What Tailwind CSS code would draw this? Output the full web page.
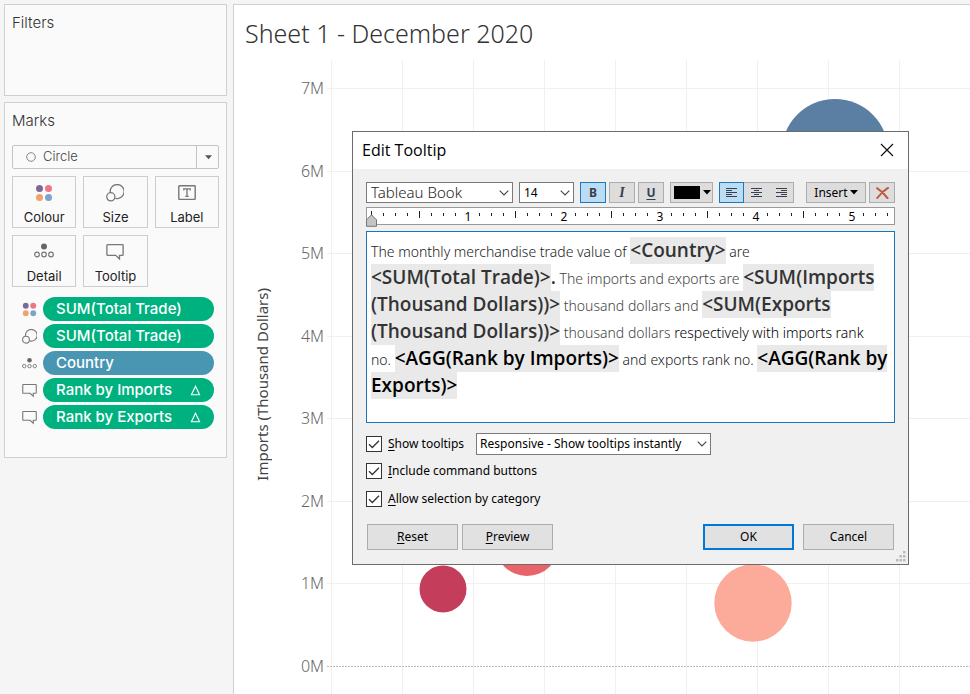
<!DOCTYPE html>
<html lang="en">
<head>
<meta charset="utf-8">
<title>Sheet 1 - December 2020</title>
<script src="https://cdn.jsdelivr.net/npm/@tailwindcss/browser@4"></script>
</head>
<body class="bg-[#f5f5f5] font-['Inter','Liberation_Sans',sans-serif] text-[#444]">
<svg class="hidden" aria-hidden="true">
  <symbol id="i-colour" viewBox="0 0 18 18"><circle cx="4.5" cy="4.5" r="3.5" fill="#7d6a94"/><circle cx="13.5" cy="4.5" r="3.5" fill="#ee7683"/><circle cx="4.5" cy="13.5" r="3.5" fill="#f0a36c"/><circle cx="13.5" cy="13.5" r="3.5" fill="#7ba3cc"/></symbol>
  <symbol id="i-size" viewBox="0 0 18 18"><g fill="none" stroke="#777" stroke-width="1.3"><path d="M4.2 8.4A7 7 0 1 1 9.4 14.3"/><circle cx="4.8" cy="12.8" r="4.1"/></g></symbol>
  <symbol id="i-detail" viewBox="0 0 20 16"><circle cx="10" cy="3.5" r="3" fill="#666"/><g fill="none" stroke="#777" stroke-width="1.2"><circle cx="3" cy="11.5" r="2.3"/><circle cx="10" cy="11.5" r="2.3"/><circle cx="17" cy="11.5" r="2.3"/></g></symbol>
  <symbol id="i-tooltip" viewBox="0 0 18 18"><path d="M1.5 1.7h15q.6 0 .6.6v9.4q0 .6-.6.6h-3v3.6l-3.8-3.6H1.5q-.6 0-.6-.6V2.3q0-.6.6-.6z" fill="none" stroke="#777" stroke-width="1.3"/></symbol>
  <symbol id="i-label" viewBox="0 0 18 18"><rect x=".8" y="1.7" width="16.4" height="13.7" rx=".6" fill="none" stroke="#777" stroke-width="1.4"/><path d="M5.8 6.4V4.800h6.4v1.6M9 4.8v7.5M7.300 12.300h3.4" fill="none" stroke="#777" stroke-width="1.3"/></symbol>
  <symbol id="i-chev" viewBox="0 0 10 6"><path d="M.7.7 5 5 9.300.7" fill="none" stroke="#444" stroke-width="1.1"/></symbol>
  <symbol id="i-tri" viewBox="0 0 8 5"><path d="M0 0h8L4 4.500z" fill="currentColor"/></symbol>
  <symbol id="i-check" viewBox="0 0 16 16"><path d="M3 8.300 6.300 11.500 13 4.800" fill="none" stroke="#333" stroke-width="1.3"/></symbol>
</svg>

<div class="flex h-screen overflow-hidden">
  <aside class="w-[233px] shrink-0 pl-1 pr-1.5 pt-1 flex flex-col gap-1.5">
    <section class="h-[92px] shrink-0 border border-[#d0d0d0] bg-[#fafafa] px-[7px] py-2">
      <h2 class="text-[15px] leading-5 font-light text-[#333]">Filters</h2>
    </section>
    <section class="border border-[#d0d0d0] bg-[#fafafa] px-[7px] pt-2 pb-7">
      <h2 class="text-[15px] leading-5 font-light text-[#333]">Marks</h2>
      <div class="relative mt-3.5">
        <select aria-label="Mark type" class="block w-full h-6 appearance-none rounded-[2px] border border-[#c4c4c4] pl-[30px] text-[13px] font-light text-[#444] outline-none"><option>Circle</option></select>
        <svg class="absolute left-3.5 top-[7px] size-2.5 pointer-events-none"><circle cx="5" cy="5" r="4.300" fill="none" stroke="#888"/></svg>
        <span class="absolute right-0 top-0 flex h-6 w-[23px] items-center justify-center border-l border-[#c4c4c4] text-[#555] pointer-events-none"><svg class="w-[7px] h-[5px]"><use href="#i-tri"/></svg></span>
      </div>
      <div class="mt-[7px] grid grid-cols-3 gap-[7px] text-[13px] leading-4 text-[#222]">
        <button class="flex h-[52px] flex-col items-center justify-between border border-[#cdcdcd] pt-[7px] pb-0.5"><svg class="size-[18px]"><use href="#i-colour"/></svg><span>Colour</span></button>
        <button class="flex h-[52px] flex-col items-center justify-between border border-[#cdcdcd] pt-[7px] pb-0.5"><svg class="size-[18px]"><use href="#i-size"/></svg><span>Size</span></button>
        <button class="flex h-[52px] flex-col items-center justify-between border border-[#cdcdcd] pt-[7px] pb-0.5"><svg class="size-[18px]"><use href="#i-label"/></svg><span>Label</span></button>
        <button class="flex h-[52px] flex-col items-center justify-between border border-[#cdcdcd] pt-[7px] pb-0.5"><svg class="h-4 w-5"><use href="#i-detail"/></svg><span>Detail</span></button>
        <button class="flex h-[52px] flex-col items-center justify-between border border-[#cdcdcd] pt-[7px] pb-0.5"><svg class="size-[18px]"><use href="#i-tooltip"/></svg><span>Tooltip</span></button>
      </div>
      <ul class="mt-2.5 flex flex-col gap-[3px] pl-2.5 pr-[5px] text-[15px] font-medium text-white">
        <li class="flex h-6 items-center gap-1.5"><svg class="size-[15px]"><use href="#i-colour"/></svg><span class="flex h-full flex-1 items-center rounded-full bg-[#00b180] px-[13px] pt-px">SUM(Total Trade)</span></li>
        <li class="flex h-6 items-center gap-1.5"><svg class="size-[15px]"><use href="#i-size"/></svg><span class="flex h-full flex-1 items-center rounded-full bg-[#00b180] px-[13px] pt-px">SUM(Total Trade)</span></li>
        <li class="flex h-6 items-center gap-1.5"><svg class="size-[15px]"><use href="#i-detail"/></svg><span class="flex h-full flex-1 items-center rounded-full bg-[#4996b2] px-[13px] pt-px">Country</span></li>
        <li class="flex h-6 items-center gap-1.5"><svg class="size-[15px]"><use href="#i-tooltip"/></svg><span class="flex h-full flex-1 items-center justify-between rounded-full bg-[#00b180] px-[13px] pt-px">Rank by Imports<svg class="size-[11px]"><path d="M5.500 1.200 9.600 9.800H1.400z" fill="none" stroke="#fff" stroke-width="1.1"/></svg></span></li>
        <li class="flex h-6 items-center gap-1.5"><svg class="size-[15px]"><use href="#i-tooltip"/></svg><span class="flex h-full flex-1 items-center justify-between rounded-full bg-[#00b180] px-[13px] pt-px">Rank by Exports<svg class="size-[11px]"><path d="M5.500 1.200 9.600 9.800H1.400z" fill="none" stroke="#fff" stroke-width="1.1"/></svg></span></li>
      </ul>
    </section>
  </aside>

  <main class="mt-1 flex min-w-0 flex-1 flex-col border-l border-t border-[#d0d0d0] bg-white font-['Noto_Sans','Open_Sans',sans-serif]">
    <h1 class="h-[55px] shrink-0 pl-[11px] pt-[11px] text-[25px] leading-[34px] font-light text-[#333]">Sheet 1 - December 2020</h1>
    <div class="flex min-h-0 flex-1">
      <div class="flex w-10 items-center justify-center pl-4 pt-3.5"><span class="[writing-mode:vertical-rl] rotate-180 whitespace-nowrap text-[15px] leading-5 text-[#444]">Imports (Thousand Dollars)</span></div>
      <ul class="flex w-[50px] flex-col justify-between py-[18px] text-right text-[16px] leading-5 font-light text-[#666]">
        <li>7M</li><li>6M</li><li>5M</li><li>4M</li><li>3M</li><li>2M</li><li>1M</li><li>0M</li>
      </ul>
      <svg class="ml-[3px] h-full min-w-0 flex-1" role="img" aria-label="Imports by country">
        <g stroke="#f0f0f0" stroke-width="1">
          <path d="M4.500 0v700M75.500 0v700M146.500 0v700M217.500 0v700M288.500 0v700M359.500 0v700M430.500 0v700M501.500 0v700M572.500 0v700"/>
          <path d="M0 28.500h2000M0 111.500h2000M0 193.500h2000M0 276.500h2000M0 358.500h2000M0 441.500h2000M0 523.500h2000"/>
        </g>
        <path d="M0 606.500h2000" stroke="#bbb" stroke-dasharray="2 1"/>
        <circle cx="508" cy="92.500" r="53.500" fill="#5b7fa3"/>
        <circle cx="200" cy="484" r="32" fill="#e8646a"/>
        <circle cx="116" cy="529" r="23.500" fill="#c43e5b"/>
        <circle cx="426" cy="543" r="38.700" fill="#fcaa99"/>
      </svg>
    </div>
  </main>
</div>

<div role="dialog" aria-label="Edit Tooltip" class="absolute left-[352px] top-[131px] w-[557px] border border-[#6b6b6b] bg-[#f0f0f0] font-['Noto_Sans','Open_Sans',sans-serif] text-[12px] text-black">
  <header class="flex h-[37px] items-center justify-between bg-white pb-px pl-[9px] pr-3.5">
    <h2 class="font-['Open_Sans',sans-serif] text-[16px] leading-6">Edit Tooltip</h2>
    <button aria-label="Close" class="size-[14px]"><svg viewBox="0 0 14 14"><path d="M1 1l12 12M13 1 1 13" stroke="#111" stroke-width="1.2"/></svg></button>
  </header>
  <div class="px-[13px] pt-[13px] pb-3.5">
    <div class="flex h-[21px] justify-between">
      <div class="flex gap-1.5">
        <div class="relative w-[147px]"><select aria-label="Font" class="block h-full w-full appearance-none border border-[#7a7a7a] bg-white pl-1 text-[15px] leading-[19px] font-light text-[#222] outline-none"><option>Tableau Book</option></select><svg class="absolute right-1 top-2 h-1.5 w-2.5 pointer-events-none"><use href="#i-chev"/></svg></div>
        <div class="relative w-[55px]"><select aria-label="Font size" class="block h-full w-full appearance-none border border-[#7a7a7a] bg-white pl-1 text-[12px] outline-none"><option>14</option></select><svg class="absolute right-1 top-2 h-1.5 w-2.5 pointer-events-none"><use href="#i-chev"/></svg></div>
        <div class="flex gap-[3px] text-[#36404f]">
          <button aria-label="Bold" class="flex w-[26px] items-center justify-center border border-[#1a7ac0] bg-[#bcdcf4] font-bold">B</button>
          <button aria-label="Italic" class="flex w-[26px] items-center justify-center border border-[#adadad] bg-[#ddd] font-['Liberation_Serif',serif] text-[14px] font-bold italic">I</button>
          <button aria-label="Underline" class="flex w-[26px] items-center justify-center border border-[#adadad] bg-[#ddd] font-bold underline underline-offset-2">U</button>
        </div>
        <button aria-label="Text colour" class="flex w-[43px] items-center justify-between border border-[#adadad] bg-[#ddd] pl-[3px] pr-px"><span class="h-[13px] w-[26px] bg-black"></span><svg class="h-[5px] w-2"><use href="#i-tri"/></svg></button>
        <div class="flex">
          <button aria-label="Align left" class="flex w-[25px] items-center justify-center border border-[#1a7ac0] bg-[#bcdcf4]"><svg class="h-[9px] w-[11px]"><path d="M0 .5h11M0 2.500h6M0 4.500h11M0 6.500h6M0 8.500h11" stroke="#36404f"/></svg></button>
          <button aria-label="Align centre" class="flex w-[25px] items-center justify-center border-y border-[#adadad] bg-[#ddd]"><svg class="h-[9px] w-[11px]"><path d="M0 .5h11M3 2.500h5M0 4.500h11M3 6.500h5M0 8.500h11" stroke="#36404f"/></svg></button>
          <button aria-label="Align right" class="flex w-[25px] items-center justify-center border-y border-r border-[#adadad] bg-[#ddd]"><svg class="h-[9px] w-[11px]"><path d="M0 .5h11M5 2.500h6M0 4.500h11M5 6.500h6M0 8.500h11" stroke="#36404f"/></svg></button>
        </div>
      </div>
      <div class="flex gap-[3px]">
        <button class="flex w-[60px] items-center justify-center gap-0.5 border border-[#adadad] bg-[#ddd]">Insert<svg class="h-[5px] w-2"><use href="#i-tri"/></svg></button>
        <button aria-label="Clear" class="flex w-[26px] items-center justify-center border border-[#adadad] bg-[#ddd]"><svg class="h-3 w-[13px]" viewBox="0 0 13 12"><path d="M1 1.200Q7 5 11.500 11.200M12 .8Q6 4.500 1.200 11" fill="none" stroke="#c05a40" stroke-width="2" stroke-linecap="round"/></svg></button>
      </div>
    </div>

    <div class="relative mt-1 h-[18px] border border-[#999] bg-white">
      <svg class="block h-full w-full font-['Noto_Sans',sans-serif] text-[12px]" aria-hidden="true">
        <defs><pattern id="ticks" x="5" width="96" height="16" patternUnits="userSpaceOnUse"><path d="M12 5v3M24 5v3M36 5v3M60 5v3M72 5v3M84 5v3M48 3v7" transform="translate(-.5)" stroke="#222"/></pattern></defs>
        <path d="M4.500 3v7" stroke="#222"/>
        <rect x="5" width="516" height="16" fill="url(#ticks)"/>
        <g text-anchor="middle"><text x="101" y="13">1</text><text x="197" y="13">2</text><text x="293" y="13">3</text><text x="389" y="13">4</text><text x="485" y="13">5</text></g>
      </svg>
      <svg class="absolute -left-px top-1.5 h-[13px] w-[11px]"><path d="M5.500.8l5 5v6.500H.5V5.800z" fill="#c4c4c4" stroke="#777"/></svg>
    </div>

    <div role="textbox" aria-label="Tooltip text" aria-multiline="true" contenteditable="true" class="mt-[6px] h-[192px] border border-[#1a74b8] bg-white px-1 py-[5px] text-[14px] font-light leading-[27px] text-[#222] outline-none">
      <div class="flex h-[27px] items-baseline whitespace-pre"><span>The monthly merchandise trade value of </span><span class="bg-[#e9e9e9] font-['Open_Sans',sans-serif] text-[19px] font-semibold text-[#333]">&lt;Country&gt;</span><span> are</span></div>
      <div class="flex h-[27px] items-baseline whitespace-pre"><span class="bg-[#e9e9e9] font-['Open_Sans',sans-serif] text-[19px] font-semibold text-[#333]">&lt;SUM(Total Trade)&gt;</span><span class="font-['Open_Sans',sans-serif] text-[19px] font-semibold text-[#333]">.</span><span class="text-[#444]"> The imports and exports are </span><span class="bg-[#e9e9e9] font-['Open_Sans',sans-serif] text-[19px] font-semibold text-[#333]">&lt;SUM(Imports</span></div>
      <div class="flex h-[27px] items-baseline whitespace-pre"><span class="bg-[#e9e9e9] font-['Open_Sans',sans-serif] text-[19px] font-semibold text-[#333]">(Thousand Dollars))&gt;</span><span class="text-[#444]"> thousand dollars and </span><span class="bg-[#e9e9e9] font-['Open_Sans',sans-serif] text-[19px] font-semibold text-[#333]">&lt;SUM(Exports</span></div>
      <div class="flex h-[27px] items-baseline whitespace-pre"><span class="bg-[#e9e9e9] font-['Open_Sans',sans-serif] text-[19px] font-semibold text-[#333]">(Thousand Dollars))&gt;</span><span class="text-[#444]"> thousand dollars </span><span class="text-black">respectively with imports rank</span></div>
      <div class="flex h-[27px] items-baseline whitespace-pre"><span>no. </span><span class="bg-[#e9e9e9] font-['Open_Sans',sans-serif] text-[19px] font-semibold text-black">&lt;AGG(Rank by Imports)&gt;</span><span> and exports rank no. </span><span class="bg-[#e9e9e9] font-['Open_Sans',sans-serif] text-[19px] font-semibold text-black">&lt;AGG(Rank by</span></div>
      <div class="flex h-[27px] items-baseline whitespace-pre"><span class="bg-[#e9e9e9] font-['Open_Sans',sans-serif] text-[19px] font-semibold text-black">Exports)&gt;</span></div>
    </div>

    <div class="mt-2.5 flex h-[22px] items-center gap-3">
      <label class="flex items-center gap-1.5"><span class="relative size-4"><input type="checkbox" checked class="block size-4 appearance-none border border-[#333] bg-white"><svg class="absolute inset-0 size-4 pointer-events-none"><use href="#i-check"/></svg></span><span><u class="underline-offset-2">S</u>how tooltips</span></label>
      <div class="relative w-[235px]"><select aria-label="Tooltip mode" class="block h-[22px] w-full appearance-none border border-[#7a7a7a] bg-white pl-[3px] text-[12px] outline-none"><option>Responsive - Show tooltips instantly</option></select><svg class="absolute right-1 top-2 h-1.5 w-2.5 pointer-events-none"><use href="#i-chev"/></svg></div>
    </div>
    <label class="mt-2 flex w-fit items-center gap-1.5"><span class="relative size-4"><input type="checkbox" checked class="block size-4 appearance-none border border-[#333] bg-white"><svg class="absolute inset-0 size-4 pointer-events-none"><use href="#i-check"/></svg></span><span class="leading-4"><u class="underline-offset-2">I</u>nclude command buttons</span></label>
    <label class="mt-3 flex w-fit items-center gap-1.5"><span class="relative size-4"><input type="checkbox" checked class="block size-4 appearance-none border border-[#333] bg-white"><svg class="absolute inset-0 size-4 pointer-events-none"><use href="#i-check"/></svg></span><span class="leading-4"><u class="underline-offset-2">A</u>llow selection by category</span></label>
    <div class="mt-[17px] flex justify-between px-px">
      <div class="flex gap-1">
        <button class="h-[26px] w-[91px] border border-[#adadad] bg-[#e1e1e1]"><u class="underline-offset-2">R</u>eset</button>
        <button class="h-[26px] w-[91px] border border-[#adadad] bg-[#e1e1e1]"><u class="underline-offset-2">P</u>review</button>
      </div>
      <div class="flex gap-[9px]">
        <button class="h-[26px] w-[91px] border-2 border-[#0078d7] bg-[#e1e1e1]">OK</button>
        <button class="h-[26px] w-[91px] border border-[#adadad] bg-[#e1e1e1]">Cancel</button>
      </div>
    </div>
  </div>
  <svg class="absolute bottom-0.5 right-0.5 size-[11px]" fill="#bbb" aria-hidden="true"><path d="M8 0h2.500v2.500H8zM4.500 4H7v2.500H4.500zM8 4h2.500v2.500H8zM1 8h2.500v2.500H1zM4.500 8H7v2.500H4.500zM8 8h2.500v2.500H8z"/></svg>
</div>
</body>
</html>
